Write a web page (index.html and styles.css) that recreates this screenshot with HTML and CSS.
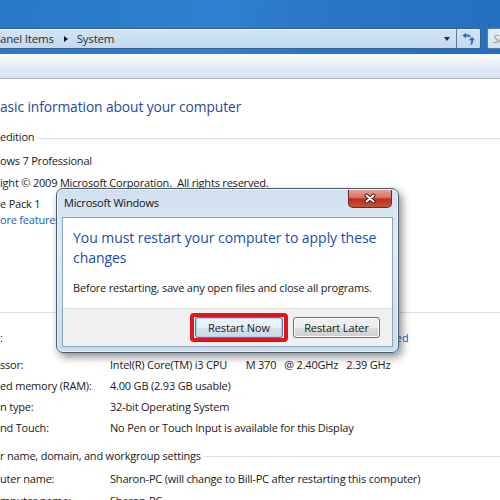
FILE: index.html
```html
<!DOCTYPE html>
<html>
<head>
<meta charset="utf-8">
<title>System</title>
<link rel="stylesheet" href="styles.css">
</head>
<body>
<div class="frame-top">
  <div class="addr-row">
    <div class="addr">
      <div class="crumbs"><span>anel Items</span><span class="sep"></span><span>System</span></div>
      <span class="drop"></span>
      <span class="refresh">
        <svg width="14" height="13" viewBox="0 0 14 13">
          <path d="M0.5 3.5 L4 0.8 L4 6.2 Z" fill="#2a66bf"/>
          <path d="M3.5 3.5 H6 Q7.5 3.5 7.8 5.2" stroke="#2a66bf" stroke-width="1.8" fill="none"/>
          <path d="M7 8.2 L10 5 L13 8.2 Z" fill="#2a66bf"/>
          <path d="M10 7.5 V10.5 Q10 12 8.5 12" stroke="#2a66bf" stroke-width="1.8" fill="none"/>
        </svg>
      </span>
    </div>
    <div class="search">Search Control Panel</div>
  </div>
</div>
<div class="toolbar"></div>
<main class="content">
  <h1 class="heading">asic information about your computer</h1>
  <div class="group-title">edition</div>
  <div class="line1">ows 7 Professional</div>
  <div class="line2">ight © 2009 Microsoft Corporation.&nbsp; All rights reserved.</div>
  <div class="line3">e Pack 1</div>
  <div class="line4 link">ore features with a new edition of Windows 7</div>
  <div class="group-rule"></div>
  <div class="row rating"><span>:</span><span class="link">Your Windows Experience Index needs to be refreshed</span></div>
  <div class="row first"><span>ssor:</span><span>Intel(R) Core(TM) i3 CPU       M 370   @ 2.40GHz   2.39 GHz</span></div>
  <div class="row"><span>ed memory (RAM):</span><span>4.00 GB (2.93 GB usable)</span></div>
  <div class="row"><span>n type:</span><span>32-bit Operating System</span></div>
  <div class="row"><span>nd Touch:</span><span>No Pen or Touch Input is available for this Display</span></div>
  <div class="group-title second">r name, domain, and workgroup settings</div>
  <div class="row cname"><span>uter name:</span><span>Sharon-PC (will change to Bill-PC after restarting this computer)</span></div>
  <div class="row cname"><span>mputer name:</span><span>Sharon-PC</span></div>
</main>

<div class="dialog">
  <div class="dlg-title">Microsoft Windows</div>
  <div class="close">
    <svg width="14" height="11" viewBox="0 0 14 11">
      <path d="M3.5 2.5 L10.5 8.5 M10.5 2.5 L3.5 8.5" stroke="#4a1a14" stroke-width="4" stroke-linecap="round"/>
      <path d="M3.5 2.5 L10.5 8.5 M10.5 2.5 L3.5 8.5" stroke="#ffffff" stroke-width="2" stroke-linecap="round"/>
    </svg>
  </div>
  <div class="client">
    <div class="client-main">
      <div class="instruction">You must restart your computer to apply these changes</div>
      <div class="body-text">Before restarting, save any open files and close all programs.</div>
    </div>
    <div class="footer">
      <div class="highlight"><button class="btn default">Restart Now</button></div>
      <button class="btn">Restart Later</button>
    </div>
  </div>
</div>
</body>
</html>
```
FILE: styles.css
```css
html, body {
  margin: 0;
  padding: 0;
}
body {
  width: 500px;
  height: 500px;
  overflow: hidden;
  position: relative;
  background: #ffffff;
  font-family: "Open Sans", "Noto Sans", sans-serif;
  font-size: 11px;
  letter-spacing: -0.2px;
  color: #1a1a1a;
}

/* ---------- explorer frame ---------- */
.frame-top {
  height: 54px;
  box-sizing: border-box;
  padding-top: 28px;
  background: linear-gradient(100deg, #2a78c8 0%, #2f80d0 45%, #2a77c6 60%, #2370c1 100%);
}
.addr-row {
  display: flex;
  height: 21px;
}
.addr {
  display: flex;
  width: 484px;
  margin-left: -3px;
  box-sizing: border-box;
  border: 1px solid #3f5f88;
  border-radius: 2px;
  background: linear-gradient(#d2e4f6, #c3d9ef);
  box-shadow: inset 0 1px 0 rgba(255,255,255,0.5);
}
.crumbs {
  flex: 1;
  display: flex;
  align-items: center;
  padding-left: 2px;
  color: #2e2e2e;
  white-space: nowrap;
  font-size: 11.5px;
}
.sep {
  width: 0;
  height: 0;
  border-left: 4px solid #111;
  border-top: 3.5px solid transparent;
  border-bottom: 3.5px solid transparent;
  margin: 0 9px 0 10px;
}
.drop {
  align-self: center;
  width: 0;
  height: 0;
  border-top: 4px solid #1b2660;
  border-left: 3.5px solid transparent;
  border-right: 3.5px solid transparent;
  margin-right: 6px;
}
.refresh {
  width: 23px;
  border-left: 1px solid #5d7ba3;
  display: flex;
  align-items: center;
  justify-content: center;
}
.search {
  flex: 1;
  margin-left: 6px;
  border: 1px solid #5e7ea8;
  border-right: none;
  border-radius: 2px 0 0 2px;
  background: linear-gradient(#e3edf8, #d6e4f3);
  color: #8b96a4;
  font-style: italic;
  font-size: 11.5px;
  padding-left: 5px;
  line-height: 19px;
  white-space: nowrap;
  overflow: hidden;
}
.toolbar {
  height: 23px;
  border-top: 1px solid #f3f6fb;
  border-bottom: 1px solid #a9b2bf;
  background: linear-gradient(#fbfcfe 0%, #f1f4fa 25%, #e2e8f3 60%, #dce3ef 100%);
}

/* ---------- content ---------- */
.content {
  display: block;
  white-space: nowrap;
}
.heading {
  margin: 18px 0 0;
  font-size: 13.8px;
  font-weight: normal;
  line-height: 20px;
  color: #1f49a0;
  letter-spacing: -0.1px;
}
.group-title {
  display: flex;
  align-items: center;
  line-height: 16px;
  margin-top: 12px;
}
.group-title::after {
  content: "";
  flex: 1;
  border-top: 1px solid #d9dee5;
  margin: 2px 0 0 3px;
}
.group-title.second {
  margin-top: 10px;
}
.line1, .line2 {
  line-height: 21px;
}
.line1 { margin-top: 5px; }
.line2 { margin-top: 1px; }
.line3, .line4 {
  line-height: 16px;
}
.line3 { margin-top: 2.5px; }
.link {
  color: #1a62c0;
}
.group-rule {
  margin-top: 84px;
  border-top: 1px solid #d9dee5;
}
.row {
  display: grid;
  grid-template-columns: 110px auto;
  line-height: 21px;
  white-space: pre;
}
.row.rating { margin-top: 14px; }
.row.rating .link { letter-spacing: 0.37px; }
.row.first { margin-top: 6px; }
.row.cname {
  line-height: 22px;
}
.group-title.second + .row { margin-top: 4px; }

/* ---------- dialog ---------- */
.dialog {
  position: absolute;
  left: 56px;
  top: 188px;
  width: 343px;
  height: 165px;
  box-sizing: border-box;
  border: 1px solid #4d5a69;
  border-radius: 7px;
  padding: 0 5px 5px 5px;
  display: flex;
  flex-direction: column;
  background: linear-gradient(180deg, #cfe0f1 0%, #e0ebf7 35%, #d2e2f2 70%, #cadcee 100%);
  box-shadow: inset 0 0 0 1px rgba(255,255,255,0.6), 3px 4px 9px rgba(0,0,0,0.45);
}
.dlg-title {
  height: 28px;
  line-height: 28px;
  padding-left: 2px;
  color: #111;
  font-size: 11px;
}
.close {
  position: absolute;
  top: 1px;
  right: 6px;
  width: 44px;
  height: 18px;
  box-sizing: border-box;
  border: 1px solid #6b2a22;
  border-top: none;
  border-radius: 0 0 5px 5px;
  background: linear-gradient(#e6a296 0%, #d66f5f 45%, #bb2f1b 52%, #c8503a 100%);
  display: flex;
  align-items: center;
  justify-content: center;
}
.client {
  flex: 1;
  display: flex;
  flex-direction: column;
  border: 1px solid #8ea4bd;
  background: #ffffff;
}
.client-main {
  flex: 1;
  padding: 10px 10px 0 10px;
}
.instruction {
  font-size: 14px;
  line-height: 20px;
  color: #1b4bb0;
  letter-spacing: -0.05px;
}
.body-text {
  margin-top: 12px;
  line-height: 16px;
  color: #1a1a1a;
  white-space: nowrap;
}
.footer {
  height: 37px;
  border-top: 1px solid #dfdfdf;
  background: #f0f0f0;
  display: flex;
  justify-content: flex-end;
  align-items: center;
  padding-right: 12px;
  gap: 5px;
}
.highlight {
  border: 4px solid #e3141b;
  border-radius: 4px;
  padding: 0 1px;
  display: flex;
}
.btn {
  height: 21px;
  width: 87px;
  box-sizing: border-box;
  border: 1px solid #707070;
  border-radius: 3px;
  padding: 0;
  font-family: "Open Sans", "Noto Sans", sans-serif;
  font-size: 11px;
  letter-spacing: -0.1px;
  color: #1a1a1a;
  background: linear-gradient(#f2f2f2 0%, #ebebeb 50%, #dddddd 51%, #cfcfcf 100%);
  box-shadow: inset 0 0 0 1px #fbfbfb;
}
.btn.default {
  width: 88px;
  border-color: #3c7fb1;
  background: linear-gradient(#f0f5f9 0%, #e6eef5 50%, #d6e2ec 51%, #cbd9e6 100%);
  box-shadow: inset 0 0 0 1px #9fd8f5;
}
```
